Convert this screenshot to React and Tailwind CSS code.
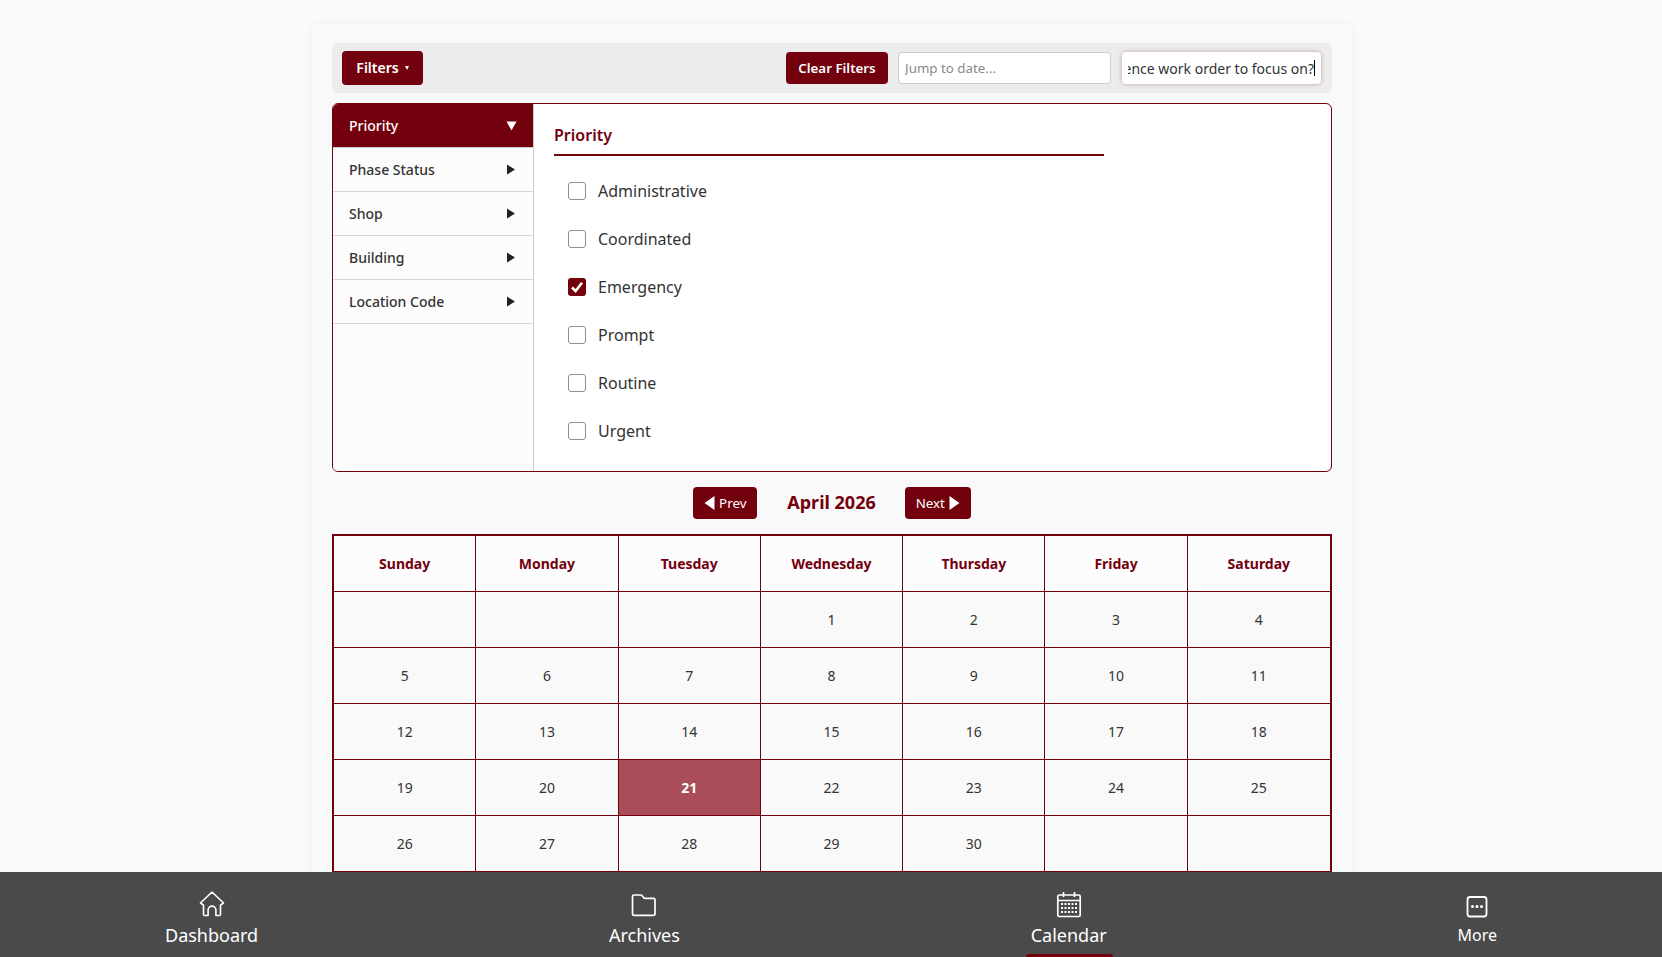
const filtros = ['Priority', 'Phase Status', 'Shop', 'Building', 'Location Code']
const prioridades = ['Administrative', 'Coordinated', 'Emergency', 'Prompt', 'Routine', 'Urgent']
const dias = ['Sunday', 'Monday', 'Tuesday', 'Wednesday', 'Thursday', 'Friday', 'Saturday']
const celdas = [
  '', '', '', 1, 2, 3, 4,
  5, 6, 7, 8, 9, 10, 11,
  12, 13, 14, 15, 16, 17, 18,
  19, 20, 21, 22, 23, 24, 25,
  26, 27, 28, 29, 30, '', '',
]

function HomeIcon() {
  return (
    <svg width="28" height="28" viewBox="0 0 28 28" fill="none" stroke="white" strokeWidth="1.6" strokeLinejoin="round">
      <path d="M14 2 25.5 13 22.5 15.2V24.5a1 1 0 0 1-1 1h-3.6V20a3.9 3.9 0 0 0-7.8 0v5.5H6.5a1 1 0 0 1-1-1V15.2L2.5 13Z" />
    </svg>
  )
}

function FolderIcon() {
  return (
    <svg width="28" height="28" viewBox="0 0 28 28" fill="none" stroke="white" strokeWidth="1.7" strokeLinejoin="round">
      <path d="M2.5 6.5a1.5 1.5 0 0 1 1.5-1.5h6.8a1.5 1.5 0 0 1 1.2.6l1.8 2.2a1.5 1.5 0 0 0 1.2.6h8.5a1.5 1.5 0 0 1 1.5 1.5v14a1.5 1.5 0 0 1-1.5 1.5H4a1.5 1.5 0 0 1-1.5-1.5Z" />
    </svg>
  )
}

function CalendarIcon() {
  const filas = [14, 18, 22]
  const cols = [7, 10.5, 14, 17.5, 21]
  return (
    <svg width="28" height="28" viewBox="0 0 28 28" fill="none" stroke="white" strokeWidth="1.7">
      <rect x="2.8" y="5" width="22.4" height="21.5" rx="1.5" />
      <path d="M3 10.5h22M8.5 2v5M19.5 2v5" />
      {filas.map((y) => cols.map((x) => (
        <rect key={`${x}-${y}`} x={x - 1} y={y - 1} width="2" height="2" fill="white" stroke="none" />
      )))}
    </svg>
  )
}

function MoreIcon() {
  return (
    <svg width="28" height="28" viewBox="0 0 28 28" fill="none" stroke="white" strokeWidth="1.8">
      <rect x="4.5" y="7" width="19" height="19.5" rx="2.5" />
      <circle cx="9.5" cy="16.5" r="1.5" fill="white" stroke="none" />
      <circle cx="14" cy="16.5" r="1.5" fill="white" stroke="none" />
      <circle cx="18.5" cy="16.5" r="1.5" fill="white" stroke="none" />
    </svg>
  )
}

function Flecha({ dir = 'right' }) {
  if (dir === 'down') {
    return (
      <svg width="11" height="10" viewBox="0 0 11 10" className="shrink-0">
        <polygon points="0.5,0.5 10.5,0.5 5.5,9.5" fill="currentColor" />
      </svg>
    )
  }
  return (
    <svg width="8" height="11" viewBox="0 0 8 11" className="shrink-0">
      <polygon points="0,0.5 8,5.5 0,10.5" fill="currentColor" />
    </svg>
  )
}

function FlechaBoton({ dir = 'right' }) {
  return (
    <svg width="11" height="14" viewBox="0 0 11 14" className="shrink-0">
      <polygon points={dir === 'right' ? '0.5,0 10.5,7 0.5,14' : '10.5,0 0.5,7 10.5,14'} fill="currentColor" />
    </svg>
  )
}

function BarraFiltros() {
  return (
    <div className="h-[50px] bg-[#ececec] rounded-md flex items-center pl-2.5 pr-[11px]">
      <button className="h-[34px] w-[81px] pb-0.5 bg-[#73000d] text-white rounded text-[14px] font-semibold flex items-center justify-center gap-1.5">
        Filters
        <span className="w-0 h-0 mt-0.5 border-x-[2.5px] border-x-transparent border-t-[4px] border-t-white" />
      </button>
      <div className="flex-1" />
      <button className="h-8 w-[102px] pt-px bg-[#73000d] text-white rounded text-[13.33px] font-semibold">
        Clear Filters
      </button>
      <input
        placeholder="Jump to date..."
        className="ml-2.5 h-8 w-[213px] bg-white border border-[#cccccc] rounded px-1.5 text-[13.33px] placeholder:text-[#8a8a8a] outline-none"
      />
      <div className="ml-[11px] h-8 w-[199px] bg-white rounded px-1.5 flex items-center shadow-[0_0_4px_rgba(115,0,13,0.35)]">
        <div className="w-full flex items-center justify-end overflow-hidden text-[14px] text-[#333333]">
          <span className="whitespace-nowrap shrink-0">Which preference work order to focus on?</span>
          <span className="w-px h-4 bg-black shrink-0" />
        </div>
      </div>
    </div>
  )
}

function PanelFiltros() {
  return (
    <div className="mt-2.5 h-[369px] border border-[#73000d] rounded-md overflow-hidden flex bg-white">
      <div className="w-[201px] shrink-0 bg-[#fcfcfc] border-r border-[#cccccc]">
        {filtros.map((f, i) => (
          <div
            key={f}
            className={i === 0
              ? 'h-11 pl-4 pr-4 flex items-center justify-between bg-[#73000d] text-white text-[14px] font-medium border-b border-[#cccccc]'
              : 'h-11 pl-4 pr-[18px] flex items-center justify-between text-[#333333] text-[14px] font-medium border-b border-[#d5d5d5]'}
          >
            {f}
            {i === 0 ? <Flecha dir="down" /> : <span className="text-[#222222]"><Flecha /></span>}
          </div>
        ))}
      </div>
      <div className="flex-1 pl-5 pt-[19px]">
        <h3 className="w-[550px] h-[33px] border-b-2 border-[#73000d] text-[16px] leading-[24px] font-semibold text-[#73000d]">
          Priority
        </h3>
        <div className="pl-3.5 pt-[11px]">
          {prioridades.map((p) => (
            <label key={p} className="h-12 flex items-center gap-3 text-[16px] text-[#333333]">
              {p === 'Emergency' ? (
                <span className="w-[18px] h-[18px] rounded-[3px] bg-[#73000d] flex items-center justify-center">
                  <svg width="14" height="14" viewBox="0 0 14 14" fill="none" stroke="white" strokeWidth="2.6">
                    <path d="M2 7.5 5.6 11 12 2.8" />
                  </svg>
                </span>
              ) : (
                <span className="w-[18px] h-[18px] rounded-[3px] bg-white border border-[#8f8f9d]" />
              )}
              {p}
            </label>
          ))}
        </div>
      </div>
    </div>
  )
}

function Calendario() {
  return (
    <>
      <div className="mt-[15px] h-8 flex items-center justify-center">
        <button className="h-8 w-16 bg-[#73000d] text-white rounded text-[13.33px] flex items-center justify-center gap-1">
          <FlechaBoton dir="left" />
          <span className="pt-0.5">Prev</span>
        </button>
        <span className="ml-[30px] mr-[29px] pb-0.5 text-[18px] font-bold text-[#73000d]">April 2026</span>
        <button className="h-8 w-[66px] bg-[#73000d] text-white rounded text-[13.33px] flex items-center justify-center gap-1">
          <span className="pt-0.5">Next</span>
          <FlechaBoton />
        </button>
      </div>
      <div className="mt-[15px] border-2 border-[#73000d] grid grid-cols-7">
        {dias.map((d, i) => (
          <div
            key={d}
            className={`h-14 flex items-center justify-center text-[14px] font-bold text-[#73000d] bg-[#fcfcfc] border-b border-[#73000d] ${i < 6 ? 'border-r' : ''}`}
          >
            {d}
          </div>
        ))}
        {celdas.map((c, i) => (
          <div
            key={i}
            className={`${i < 28 ? 'h-14 border-b' : 'h-[55px]'} border-[#73000d] flex items-center justify-center text-[14px] ${i % 7 < 6 ? 'border-r' : ''} ${c === 21 ? 'bg-[#a94e58] text-white font-bold' : 'text-[#333333]'}`}
          >
            {c}
          </div>
        ))}
      </div>
    </>
  )
}

function ItemNav({ icon, label, activo, chico }) {
  return (
    <div className="relative flex flex-col items-center h-full pt-[18px]">
      {icon}
      <span className={`mt-[5px] leading-[24px] text-white ${chico ? 'text-[16px]' : 'text-[18px]'}`}>{label}</span>
      {activo && <span className="absolute bottom-0 left-[-5px] right-[-6px] h-[3px] bg-[#73000d] rounded-t" />}
    </div>
  )
}

export default function App() {
  return (
    <div className="h-screen flex flex-col overflow-hidden bg-[#fafafa] font-['Noto_Sans',sans-serif]">
      <main className="flex-1 min-h-0 overflow-hidden pt-[23px] pl-[2px]">
        <div className="mx-auto w-[1040px] h-[1000px] p-5 bg-[#f9f9f9] rounded-lg shadow-[0_0_6px_rgba(0,0,0,0.06)]">
          <BarraFiltros />
          <PanelFiltros />
          <Calendario />
        </div>
      </main>
      <nav className="h-[85px] shrink-0 bg-[#4a4a4a] flex justify-between px-[165px]">
        <ItemNav icon={<HomeIcon />} label="Dashboard" />
        <ItemNav icon={<FolderIcon />} label="Archives" />
        <ItemNav icon={<CalendarIcon />} label="Calendar" activo />
        <ItemNav icon={<MoreIcon />} label="More" chico />
      </nav>
    </div>
  )
}
